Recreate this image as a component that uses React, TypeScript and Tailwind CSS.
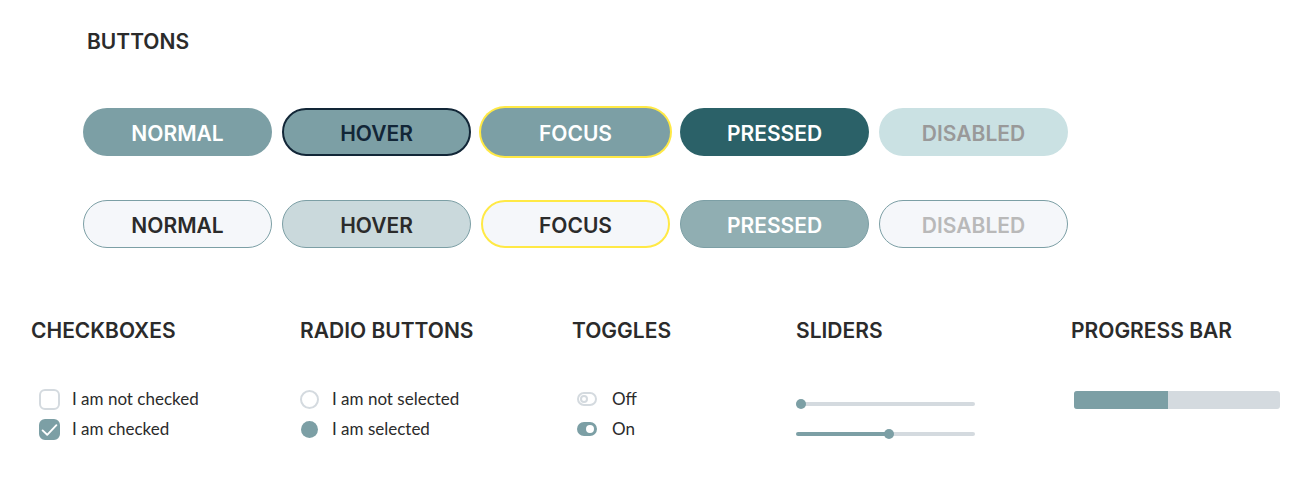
import { useState } from "react";
import type { ReactNode } from "react";
import clsx from "clsx";

const TEAL = "#7c9fa5";
const TRACK = "#d4dadf";

interface ButtonSpec {
  label: string;
  look: string;
  disabled?: boolean;
}

const filledButtons: ButtonSpec[] = [
  { label: "NORMAL", look: "bg-[#7c9fa5] text-white" },
  { label: "HOVER", look: "bg-[#7c9fa5] text-[#122637] border-2 border-[#122637]" },
  { label: "FOCUS", look: "bg-[#7c9fa5] text-white ring-2 ring-[#ffe945]" },
  { label: "PRESSED", look: "bg-[#2b6168] text-white" },
  { label: "DISABLED", look: "bg-[#cae1e3] text-[#999999]", disabled: true },
];

const outlinedButtons: ButtonSpec[] = [
  { label: "NORMAL", look: "bg-[#f5f7fa] text-[#2b2b2b] border border-[#7c9fa5]" },
  { label: "HOVER", look: "bg-[#cad9dc] text-[#2b2b2b] border border-[#7c9fa5]" },
  { label: "FOCUS", look: "bg-[#f5f7fa] text-[#2b2b2b] border-2 border-[#ffe945]" },
  { label: "PRESSED", look: "bg-[#90aeb2] text-white border border-[#7c9fa5]" },
  { label: "DISABLED", look: "bg-[#f5f7fa] text-[#b9b9b9] border border-[#7c9fa5]", disabled: true },
];

function ButtonRow({ items }: { items: ButtonSpec[] }) {
  return (
    <div className="grid grid-cols-[repeat(auto-fit,minmax(160px,1fr))] gap-[10px]">
      {items.map((b) => (
        <button
          key={b.label}
          type="button"
          disabled={b.disabled}
          className={clsx(
            "flex h-12 items-center justify-center rounded-full pt-1 text-[21px] leading-6 font-semibold",
            b.look,
          )}
        >
          {b.label}
        </button>
      ))}
    </div>
  );
}

function Section({ title, children }: { title: string; children: ReactNode }) {
  return (
    <section className="min-w-0">
      <h2 className="text-[21px] leading-6 font-semibold whitespace-nowrap">{title}</h2>
      <div className="mt-[41px]">{children}</div>
    </section>
  );
}

const rowClass = "flex h-[30px] items-center";
const labelClass = "font-['Lato','Noto_Sans',sans-serif] text-[17px] leading-6 whitespace-nowrap";

function Checkbox({ id, label, initial = false }: { id: string; label: string; initial?: boolean }) {
  return (
    <div className={clsx(rowClass, "gap-3 pl-2")}>
      <span className="grid size-[21px] place-items-center">
        <input
          id={id}
          type="checkbox"
          defaultChecked={initial}
          className="peer col-start-1 row-start-1 size-[21px] appearance-none rounded-[6px] border-2 border-[#d4dadf] checked:border-[#7c9fa5] checked:bg-[#7c9fa5]"
        />
        <svg
          viewBox="0 0 21 21"
          aria-hidden="true"
          className="pointer-events-none invisible col-start-1 row-start-1 size-[21px] peer-checked:visible"
        >
          <path
            d="M3.6 11.4 L8.2 15.8 L17.4 6.2"
            fill="none"
            stroke="white"
            strokeWidth="1.9"
            strokeLinecap="round"
            strokeLinejoin="round"
          />
        </svg>
      </span>
      <label htmlFor={id} className={labelClass}>
        {label}
      </label>
    </div>
  );
}

function Radio({ id, label, initial = false }: { id: string; label: string; initial?: boolean }) {
  return (
    <div className={clsx(rowClass, "gap-[13px]")}>
      <input
        id={id}
        type="radio"
        name="selection"
        defaultChecked={initial}
        className="size-[19px] appearance-none rounded-full border-2 border-[#d4dadf] checked:border checked:border-transparent checked:bg-[#7c9fa5] checked:bg-clip-padding"
      />
      <label htmlFor={id} className={labelClass}>
        {label}
      </label>
    </div>
  );
}

function Toggle({ id, label, initial = false }: { id: string; label: string; initial?: boolean }) {
  return (
    <div className={clsx(rowClass, "gap-[15px] pl-[5px]")}>
      <input
        id={id}
        type="checkbox"
        role="switch"
        defaultChecked={initial}
        className="flex h-[14px] w-5 appearance-none items-center rounded-full border-2 border-[#d4dadf] px-px before:size-[8px] before:rounded-full before:border-2 before:border-[#d4dadf] checked:justify-end checked:border-[#7c9fa5] checked:bg-[#7c9fa5] checked:before:border-white checked:before:bg-white"
      />
      <label htmlFor={id} className={labelClass}>
        {label}
      </label>
    </div>
  );
}

function Slider({ label, initial }: { label: string; initial: number }) {
  const [value, setValue] = useState(initial);
  return (
    <div className={rowClass}>
      <input
        type="range"
        aria-label={label}
        min={0}
        max={100}
        value={value}
        onChange={(e) => setValue(Number(e.target.value))}
        style={{ background: `linear-gradient(to right, ${TEAL} ${value}%, ${TRACK} ${value}%)` }}
        className="block h-1 w-full max-w-[179px] appearance-none rounded-full [&::-webkit-slider-thumb]:size-[10px] [&::-webkit-slider-thumb]:appearance-none [&::-webkit-slider-thumb]:rounded-full [&::-webkit-slider-thumb]:bg-[#7c9fa5]"
      />
    </div>
  );
}

export default function App() {
  return (
    <main className="bg-white pt-[30px] pb-10 font-['Inter',sans-serif] text-[#2b2b2b]">
      <section className="max-w-[1068px] pl-[83px]">
        <h2 className="pl-1 text-[21px] leading-6 font-semibold">BUTTONS</h2>
        <div className="mt-[54px] grid gap-11">
          <ButtonRow items={filledButtons} />
          <ButtonRow items={outlinedButtons} />
        </div>
      </section>

      <div className="mt-[71px] grid grid-cols-[269fr_272fr_224fr_275fr_209fr] pr-[34px] pl-[31px]">
        <Section title="CHECKBOXES">
          <Checkbox id="check-off" label="I am not checked" />
          <Checkbox id="check-on" label="I am checked" initial />
        </Section>
        <Section title="RADIO BUTTONS">
          <Radio id="radio-off" label="I am not selected" />
          <Radio id="radio-on" label="I am selected" initial />
        </Section>
        <Section title="TOGGLES">
          <Toggle id="toggle-off" label="Off" />
          <Toggle id="toggle-on" label="On" initial />
        </Section>
        <Section title="SLIDERS">
          <div className="pt-[5px]">
            <Slider label="Slider at start" initial={0} />
            <Slider label="Slider at middle" initial={52} />
          </div>
        </Section>
        <Section title="PROGRESS BAR">
          <div className={clsx(rowClass, "pt-[2px] pl-[3px]")}>
            <progress
              aria-label="Progress"
              max={100}
              value={45.5}
              className="block h-[18px] w-full appearance-none overflow-hidden rounded-[3px] [&::-webkit-progress-bar]:bg-[#d4dadf] [&::-webkit-progress-value]:bg-[#7c9fa5]"
            />
          </div>
        </Section>
      </div>
    </main>
  );
}
